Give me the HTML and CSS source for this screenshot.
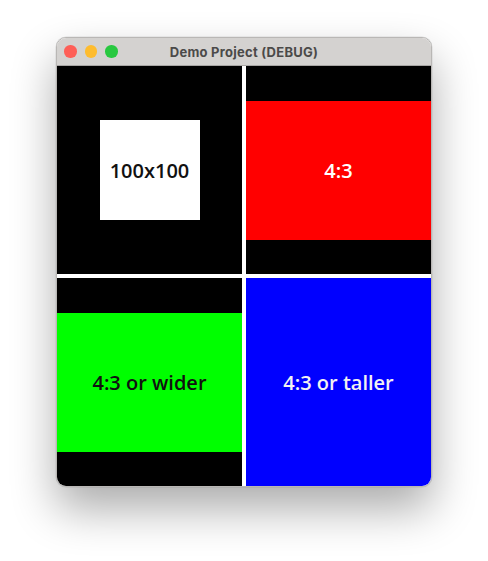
FILE: index.html
```html
<!DOCTYPE html>
<html>
<head>
<meta charset="utf-8">
<link rel="stylesheet" href="styles.css">
</head>
<body>
<div class="window">
  <div class="titlebar">
    <div class="lights">
      <span class="light red"></span>
      <span class="light yellow"></span>
      <span class="light green"></span>
    </div>
    <div class="title">Demo Project (DEBUG)</div>
  </div>
  <div class="grid">
    <div class="cell">
      <div class="square">100x100</div>
    </div>
    <div class="cell">
      <div class="ratio red-box">4:3</div>
    </div>
    <div class="cell">
      <div class="ratio green-box">4:3 or wider</div>
    </div>
    <div class="cell blue-cell">
      <div class="tall">4:3 or taller</div>
    </div>
  </div>
</div>
</body>
</html>
```
FILE: styles.css
```css
html, body {
  margin: 0;
  padding: 0;
  background: #ffffff;
}
body {
  padding: 37px 0 0 56px;
  min-height: 561px;
  box-sizing: border-box;
  font-family: "Open Sans", "Liberation Sans", sans-serif;
}
.window {
  width: 374px;
  border: 1px solid #b9b7b5;
  border-radius: 10px;
  overflow: hidden;
  background: #ffffff;
  box-shadow: 0 22px 45px rgba(0, 0, 0, 0.33), 0 0 0 0.5px rgba(0,0,0,0.1);
}
.titlebar {
  height: 28px;
  background: #d4d2d0;
  position: relative;
  display: flex;
  align-items: center;
  justify-content: center;
  border-bottom: 1px solid #a8a6a4;
  box-sizing: border-box;
}
.lights {
  position: absolute;
  left: 7px;
  top: 7px;
  display: flex;
  gap: 8px;
}
.light {
  width: 12.5px;
  height: 12.5px;
  border-radius: 50%;
  display: block;
}
.light.red { background: #fe5f57; }
.light.yellow { background: #febc2e; }
.light.green { background: #28c840; }
.title {
  font-family: "Inter", "Liberation Sans", sans-serif;
  font-weight: 700;
  font-size: 13px;
  color: #4b4a49;
  letter-spacing: 0.25px;
}
.grid {
  display: grid;
  grid-template-columns: 185px 185px;
  grid-template-rows: 208px 208px;
  gap: 4px;
  background: #ffffff;
}
.cell {
  background: #000000;
  display: flex;
  align-items: center;
  justify-content: center;
}
.square {
  width: 100px;
  height: 100px;
  background: #ffffff;
  color: #111111;
  display: flex;
  align-items: center;
  justify-content: center;
  font-size: 20px;
  font-weight: 600;
}
.ratio {
  width: 185px;
  height: 139px;
  display: flex;
  align-items: center;
  justify-content: center;
  font-size: 20px;
  font-weight: 600;
}
.red-box { background: #ff0000; color: #ffffff; }
.green-box { background: #00ff00; color: #111111; }
.blue-cell { background: #0000ff; }
.tall {
  color: #f2f2f2;
  font-size: 20px;
  font-weight: 600;
}
```
